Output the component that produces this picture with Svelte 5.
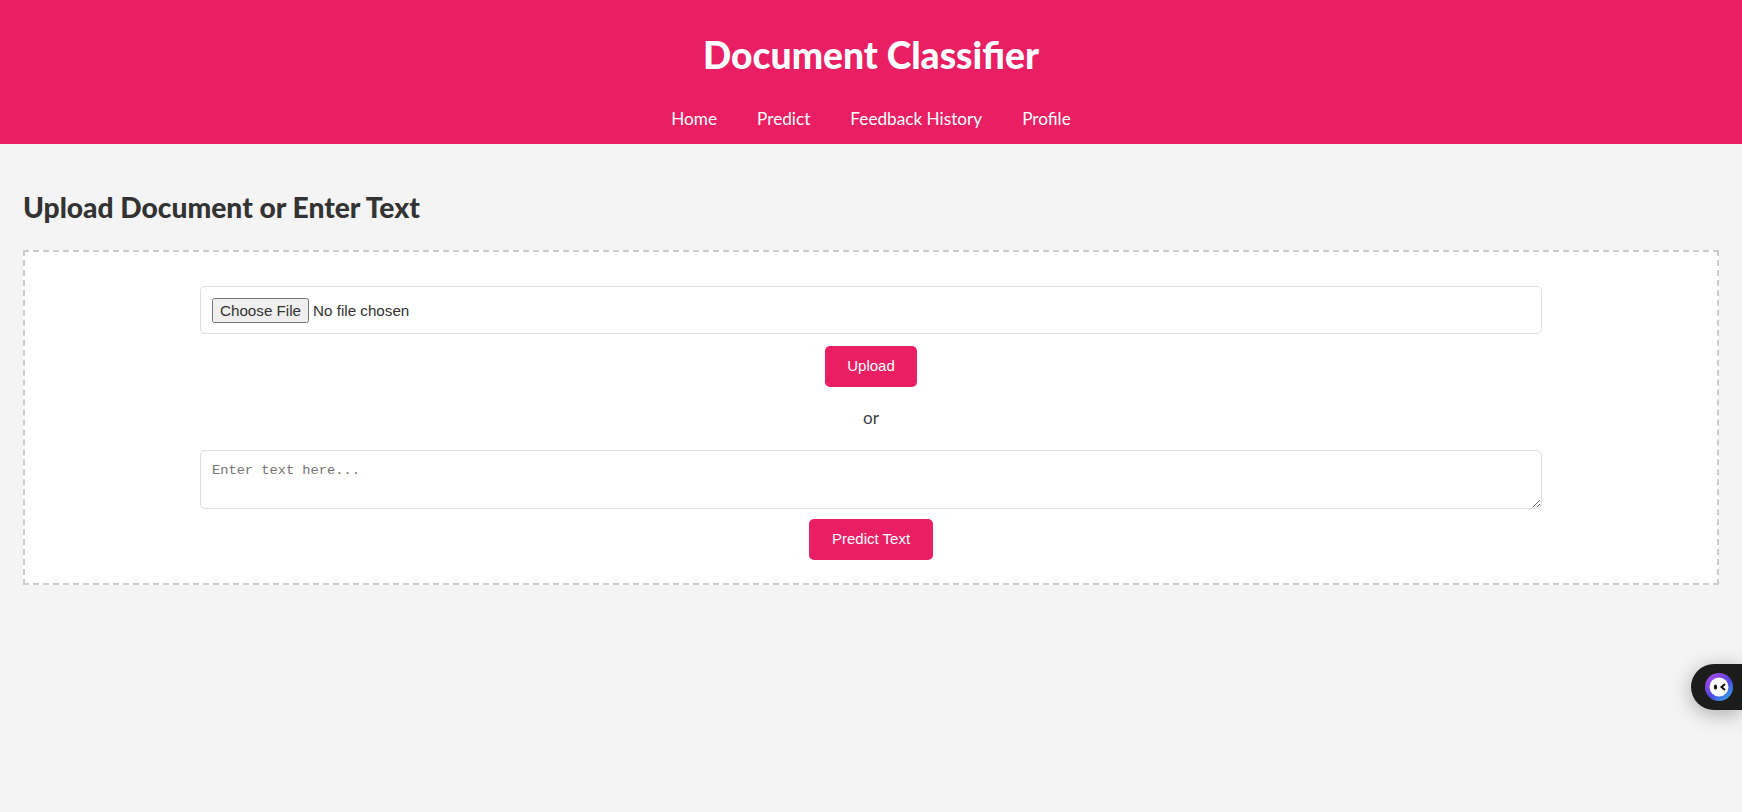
<script>
	const links = ['Home', 'Predict', 'Feedback History', 'Profile'];
</script>

<header>
	<h1>Document Classifier</h1>
	<nav>
		{#each links as link}
			<a href="#top">{link}</a>
		{/each}
	</nav>
</header>

<main>
	<h2>Upload Document or Enter Text</h2>
	<section class="box">
		<input class="file" type="file" />
		<button>Upload</button>
		<p>or</p>
		<textarea placeholder="Enter text here..."></textarea>
		<button class="predict">Predict Text</button>
	</section>
</main>

<aside class="bot">
	<svg viewBox="0 0 28 28" width="28" height="28">
		<defs>
			<linearGradient id="ring" x1="0.1" y1="0" x2="0.9" y2="1">
				<stop offset="0" stop-color="#b14be8" />
				<stop offset="0.55" stop-color="#4f46e5" />
				<stop offset="1" stop-color="#2fb4e6" />
			</linearGradient>
		</defs>
		<circle cx="14" cy="14" r="14" fill="url(#ring)" />
		<circle cx="14" cy="14" r="9.5" fill="#fff" />
		<ellipse cx="10.5" cy="14" rx="1.7" ry="2.6" fill="#111" />
		<path d="M20 11 L16.5 14 L20 17" fill="none" stroke="#111" stroke-width="2" />
	</svg>
</aside>

<style>
	:global(body) {
		background: #f4f4f4;
		color: #333;
		font-family: 'Liberation Sans', Arial, sans-serif;
	}
	header {
		background: #e91e63;
		color: #fff;
		height: 144px;
		text-align: center;
		font-family: Lato, sans-serif;
		padding-top: 33px;
		box-sizing: border-box;
	}
	h1 {
		margin: 0;
		font-size: 37.2px;
		line-height: 44px;
		font-weight: 900;
	}
	nav {
		display: flex;
		justify-content: center;
		gap: 40px;
		margin-top: 30px;
	}
	nav a {
		color: #fff;
		text-decoration: none;
		font-size: 17.2px;
		line-height: 24px;
	}
	main {
		padding: 0 23px;
	}
	h2 {
		margin: 0;
		padding: 46px 0 25px;
		font-family: Lato, sans-serif;
		font-size: 28.2px;
		line-height: 35px;
		font-weight: 900;
	}
	.box {
		background: #fff;
		border: 2px dashed #ccc;
		display: flex;
		flex-direction: column;
		align-items: center;
		padding: 34px 0 22px;
		height: 335px;
		box-sizing: border-box;
	}
	.file,
	textarea {
		width: 1342px;
		box-sizing: border-box;
		border: 1.5px solid #ddd;
		border-radius: 5px;
		background: #fff;
	}
	.file {
		height: 48px;
		padding: 11px;
		font-family: 'Liberation Sans', Arial, sans-serif;
		font-size: 15.2px;
		color: #333;
	}
	.file::file-selector-button {
		color: #333;
		height: 25px;
	}
	button {
		background: #e91e63;
		color: #fff;
		border: none;
		border-radius: 5px;
		height: 41px;
		padding: 0 22.5px 2px;
		margin-top: 12px;
		font-family: 'Liberation Sans', Arial, sans-serif;
		font-size: 15px;
	}
	.predict {
		margin-top: 10px;
	}
	p {
		margin: 20px 0 21px;
		font-family: Lato, sans-serif;
		font-size: 17px;
		line-height: 22px;
		color: #3a3f47;
	}
	textarea {
		height: 59px;
		display: block;
		padding: 12px 11px;
		font-family: 'Liberation Mono', monospace;
		font-size: 13.7px;
	}
	.bot {
		position: absolute;
		top: 664px;
		right: 0;
		width: 51px;
		height: 46px;
		background: #1c1c1c;
		border-radius: 23px 0 0 23px;
		box-shadow: 0 4px 20px rgba(0, 0, 0, 0.3);
		display: flex;
		align-items: center;
		padding-left: 14px;
		box-sizing: border-box;
		overflow: hidden;
	}
	.bot svg {
		flex: none;
	}
</style>
